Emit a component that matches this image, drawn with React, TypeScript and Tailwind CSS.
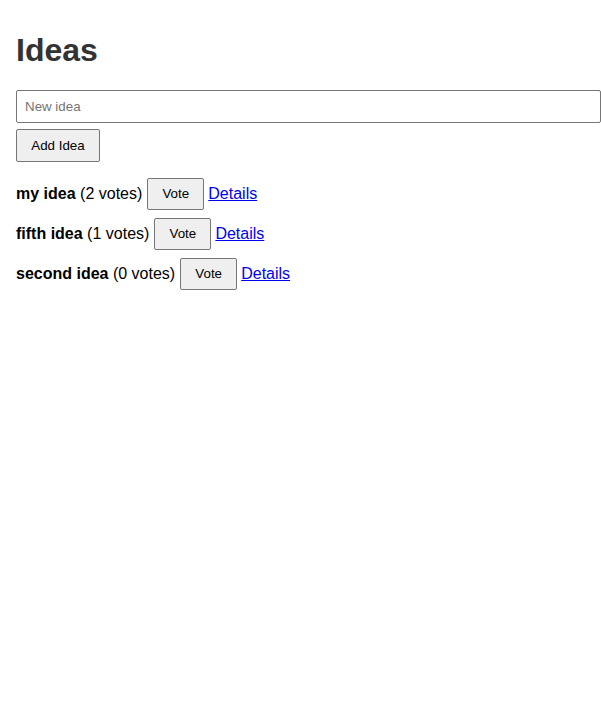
import React, { useState } from "react";

type Idea = { id: number; title: string; votes: number };

export default function App() {
  const [ideas, setIdeas] = useState<Idea[]>([
    { id: 1, title: "my idea", votes: 2 },
    { id: 5, title: "fifth idea", votes: 1 },
    { id: 2, title: "second idea", votes: 0 },
  ]);
  const [text, setText] = useState("");

  const addIdea = () => {
    if (!text.trim()) return;
    setIdeas([...ideas, { id: Date.now(), title: text, votes: 0 }]);
    setText("");
  };

  const vote = (id: number) => {
    setIdeas(
      ideas
        .map((i) => (i.id === id ? { ...i, votes: i.votes + 1 } : i))
        .sort((a, b) => b.votes - a.votes)
    );
  };

  return (
    <div className="min-h-screen bg-white px-4 pt-[32px] font-['Liberation_Sans',Arial,sans-serif] text-black">
      <h1 className="text-[32px] font-bold leading-[37px] text-[#333333]">Ideas</h1>

      <div className="mt-[21px] flex flex-col items-start gap-[6px]">
        <input
          value={text}
          onChange={(e) => setText(e.target.value)}
          placeholder="New idea"
          className="h-[33px] w-[585px] shrink-0 rounded-[2px] border border-[#767676] bg-white px-2 text-[13.33px] placeholder:text-[#757575] outline-none"
        />
        <button
          onClick={addIdea}
          className="h-[33px] w-[84px] rounded-[2px] border border-[#767676] bg-[#efefef] text-[13.33px] text-black"
        >
          Add Idea
        </button>
      </div>

      <div className="mt-[16px] flex flex-col gap-2">
        {ideas.map((idea) => (
          <div key={idea.id} className="flex h-8 items-center text-base">
            <span>
              <strong className="font-bold">{idea.title}</strong> ({idea.votes} votes)
            </span>
            <button
              onClick={() => vote(idea.id)}
              className="ml-[5px] h-8 w-[57px] rounded-[2px] border border-[#767676] bg-[#efefef] text-[13.33px] text-black"
            >
              Vote
            </button>
            <a href="#" className="ml-[4px] text-[#0000ee] underline">
              Details
            </a>
          </div>
        ))}
      </div>
    </div>
  );
}
